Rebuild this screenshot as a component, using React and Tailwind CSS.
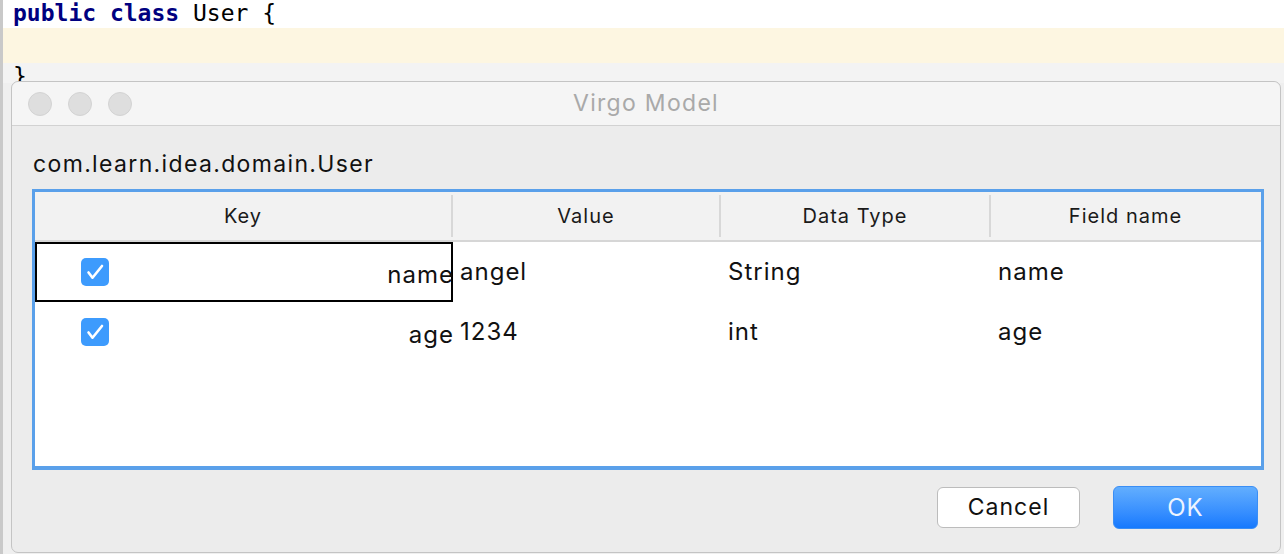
const uiFont = { fontFamily: "Inter, 'Liberation Sans', sans-serif" };

const rows = [
  { key: "name", value: "angel", type: "String", field: "name", selected: true },
  { key: "age", value: "1234", type: "int", field: "age", selected: false },
];

function Check() {
  return (
    <span className="flex h-[28px] w-[28px] rounded-[5px] bg-[#3d9bfd]">
      <svg width="28" height="28" viewBox="0 0 28 28" fill="none">
        <path d="M7.5 14.5l4 5.2L21 8" stroke="white" strokeWidth="2.6" strokeLinecap="round" strokeLinejoin="round" />
      </svg>
    </span>
  );
}

export default function App() {
  return (
    <div className="relative h-[554px] w-[1284px] overflow-hidden bg-[#efefef]">
      {/* editor behind the dialog */}
      <div className="flex h-full border-l-[3px] border-[#c9c9c9]">
        <div className="flex-1">
          <div
            className="h-[28px] bg-white pl-[10px] text-[23px] leading-[26px] text-black"
            style={{ fontFamily: "'DejaVu Sans Mono', monospace" }}
          >
            <span className="font-bold text-[#000080]">public class</span> User {"{"}
          </div>
          <div className="h-[35px] bg-[#fdf6e1]" />
          <div
            className="h-[20px] bg-[#f3f3f3] pl-[10px] text-[23px] leading-[26px] text-black"
            style={{ fontFamily: "'DejaVu Sans Mono', monospace" }}
          >
            {"}"}
          </div>
        </div>
      </div>

      {/* dialog */}
      <div
        className="absolute left-[11px] top-[81px] flex h-[472px] w-[1270px] flex-col rounded-[7px] border border-[#c4c4c4] bg-[#ececec] tracking-[1px]"
        style={uiFont}
      >
        <div className="relative flex h-[44px] shrink-0 items-center rounded-t-[7px] border-b border-[#d2d2d2] bg-[#f5f5f5] pl-[16px]">
          <div className="flex gap-[16px]">
            <span className="h-[24px] w-[24px] rounded-full border border-[#d3d3d3] bg-[#dedede]" />
            <span className="h-[24px] w-[24px] rounded-full border border-[#d3d3d3] bg-[#dedede]" />
            <span className="h-[24px] w-[24px] rounded-full border border-[#d3d3d3] bg-[#dedede]" />
          </div>
          <div className="absolute inset-0 flex items-center justify-center text-[23px] tracking-[1.3px] text-[#a9a9a9]">
            Virgo Model
          </div>
        </div>

        <div className="mt-[20px] h-[36px] pl-[21px] text-[23px] leading-[36px] tracking-[1.35px] text-[#111]">
          com.learn.idea.domain.User
        </div>

        <div className="ml-[20px] mt-[7px] flex h-[281px] w-[1232px] flex-col border-[3px] border-b-[4px] border-[#5aa0ea] bg-white">
          <div className="grid h-[50px] shrink-0 grid-cols-[418px_268px_270px_269px] border-b-2 border-[#d6d6d6] bg-[#f2f2f2] text-[20px] text-[#1a1a1a]">
            {["Key", "Value", "Data Type", "Field name"].map((h, i) => (
              <div key={h} className="flex items-center py-[3px]">
                <div className={`flex h-full flex-1 items-center justify-center ${i < 3 ? "border-r-2 border-[#d8d8d8]" : ""}`}>
                  {h}
                </div>
              </div>
            ))}
          </div>

          {rows.map((r) => (
            <div key={r.key} className="grid h-[60px] grid-cols-[418px_268px_270px_269px] text-[24px] text-[#111]">
              <div className={`flex items-center justify-between pl-[44px] pt-[6px] ${r.selected ? "border-2 border-black" : "border-2 border-transparent"}`}>
                <span className="-mt-[6px]"><Check /></span>
                <span className="-mr-[3px]">{r.key}</span>
              </div>
              <div className="flex items-center pl-[7px]">{r.value}</div>
              <div className="flex items-center pl-[7px]">{r.type}</div>
              <div className="flex items-center pl-[7px]">{r.field}</div>
            </div>
          ))}
        </div>

        <div className="mt-[16px] flex justify-end gap-[33px] pr-[22px]">
          <button
            type="button"
            className="mt-[1px] h-[41px] w-[143px] rounded-[6px] border border-[#bcbcbc] bg-white text-[23px] tracking-[1px] text-[#111]"
          >
            Cancel
          </button>
          <button
            type="button"
            className="h-[43px] w-[145px] rounded-[6px] border border-[#3a8ef5] bg-gradient-to-b from-[#62aefe] to-[#1479fe] text-[24px] tracking-[1px] text-[#eef4ff]"
          >
            OK
          </button>
        </div>
      </div>
    </div>
  );
}
